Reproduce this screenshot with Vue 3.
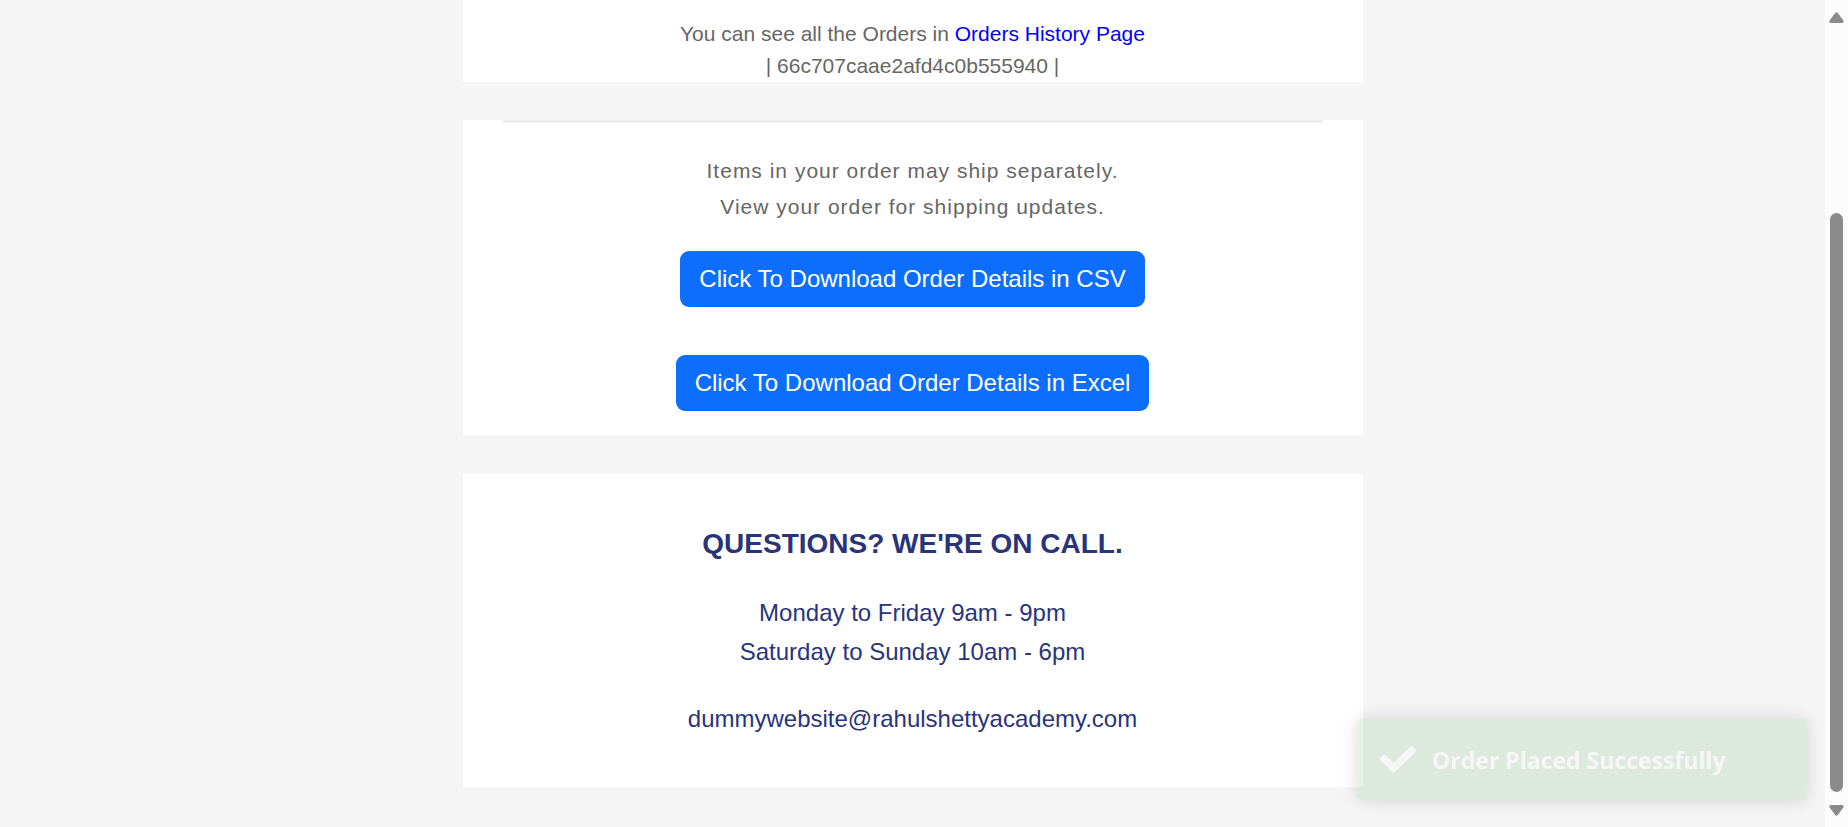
<script setup>
const orderId = '66c707caae2afd4c0b555940'
const shipping = ['Items in your order may ship separately.', 'View your order for shipping updates.']
const downloads = ['Click To Download Order Details in CSV', 'Click To Download Order Details in Excel']
const hours = ['Monday to Friday 9am - 9pm', 'Saturday to Sunday 10am - 6pm']
</script>

<template>
  <div class="shell">
    <main class="page">
      <section class="card summary">
        <p>You can see all the Orders in <a href="#orders">Orders History Page</a></p>
        <p>| {{ orderId }} |</p>
      </section>

      <section class="card shipping">
        <hr />
        <div class="notes">
          <p v-for="line in shipping" :key="line">{{ line }}</p>
        </div>
        <div class="downloads">
          <button v-for="label in downloads" :key="label" type="button">{{ label }}</button>
        </div>
      </section>

      <section class="card contact">
        <h2>QUESTIONS? WE'RE ON CALL.</h2>
        <div>
          <p v-for="line in hours" :key="line">{{ line }}</p>
        </div>
        <p class="email">dummywebsite@rahulshettyacademy.com</p>
      </section>
    </main>

    <div class="scrollbar" aria-hidden="true">
      <svg class="arrow" viewBox="0 0 15 11"><path d="M6.2 1 Q7.5 -.6 8.8 1 L14.4 8.6 Q15.2 10.6 13.3 11 H1.7 Q-.2 10.6 .6 8.6 Z" /></svg>
      <div class="track">
        <div class="thumb"></div>
      </div>
      <svg class="arrow" viewBox="0 0 15 11"><path d="M6.2 10 Q7.5 11.6 8.8 10 L14.4 2.4 Q15.2 .4 13.3 0 H1.7 Q-.2 .4 .6 2.4 Z" /></svg>
    </div>

    <div class="toast" role="alert">
      <svg class="check" viewBox="0 0 512 374"><path d="M174 365 L7 199 C-2 189 -2 172 7 162 L44 126 C54 116 70 116 80 126 L192 238 L432 7 C442 -2 458 -2 468 7 L505 44 C514 54 514 70 505 80 L210 365 C200 375 184 375 174 365 Z" /></svg>
      <span>Order Placed Successfully</span>
    </div>
  </div>
</template>

<style>
body {
  margin: 0;
  background: #f5f5f5;
}
</style>

<style scoped>
.shell {
  display: flex;
  height: 100vh;
  overflow: hidden;
  background: #f5f5f5;
  font-family: "Liberation Sans", Arial, sans-serif;
}

.page {
  flex: 1;
  display: flex;
  flex-direction: column;
  align-items: center;
}

.card {
  box-sizing: border-box;
  flex: none;
  width: 100%;
  max-width: 900px;
  background: #fff;
  text-align: center;
}

p,
h2 {
  margin: 0;
}

.summary {
  margin-bottom: 38px;
  padding-top: 18px;
  font-size: 21px;
  line-height: 32px;
  color: #666;
}

.summary a {
  color: #00f;
  text-decoration: none;
}

.shipping {
  margin-bottom: 39px;
  padding: 0 40px 24px;
}

.shipping hr {
  height: 3px;
  margin: 0 0 30px;
  border: 0;
  background: #eee;
}

.notes {
  font-size: 21px;
  line-height: 36px;
  letter-spacing: 1px;
  color: #666;
}

.downloads {
  display: flex;
  flex-direction: column;
  align-items: center;
  gap: 48px;
  margin-top: 26px;
}

.downloads button {
  padding: 10px 19px;
  border: 0;
  border-radius: 9px;
  background: #0d6efd;
  color: #fff;
  font: 24px/36px "Liberation Sans", Arial, sans-serif;
  cursor: pointer;
}

.contact {
  padding: 50px 40px 49px;
  color: #29347a;
  font-size: 24px;
  line-height: 39px;
}

.contact h2 {
  margin-bottom: 30px;
  font-size: 28px;
  line-height: 39px;
}

.email {
  margin-top: 28px;
}

.scrollbar {
  box-sizing: border-box;
  flex: none;
  display: flex;
  flex-direction: column;
  align-items: center;
  width: 23px;
  padding: 12px 0 11px;
  background: #fcfcfc;
}

.arrow {
  display: block;
  flex: none;
  width: 15px;
  height: 11px;
  fill: #8b8b8b;
}

.track {
  flex: 1;
  display: flex;
  flex-direction: column;
  width: 13px;
  padding-bottom: 13px;
}

.track::before {
  content: "";
  flex: 190;
}

.thumb {
  flex: 579;
  border-radius: 7px;
  background: #8b8b8b;
}

.toast {
  position: fixed;
  right: 41px;
  bottom: 27px;
  box-sizing: border-box;
  display: flex;
  align-items: center;
  gap: 16px;
  width: 450px;
  height: 81px;
  padding: 0 23px;
  border-radius: 5px;
  background: #51a351;
  box-shadow: 0 0 18px #000;
  color: #fff;
  font: bold 23px/36px "Open Sans", "Noto Sans", sans-serif;
  opacity: 0.14;
}

.check {
  flex: none;
  width: 36px;
  height: 27px;
  fill: #fff;
}
</style>
